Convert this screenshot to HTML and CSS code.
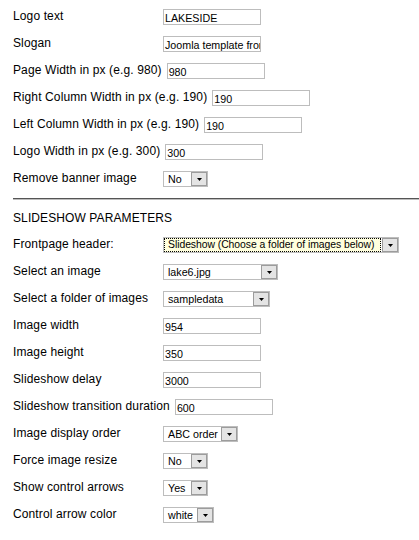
FILE: index.html
```html
<!DOCTYPE html>
<html>
<head>
<meta charset="utf-8">
<title>Template parameters</title>
<link rel="stylesheet" href="styles.css">
</head>
<body>
<div class="form">
  <div class="row"><span class="key">Logo text</span><span class="field">LAKESIDE</span></div>
  <div class="row"><span class="key">Slogan</span><span class="field">Joomla template from</span></div>
  <div class="row"><span class="key">Page Width in px (e.g. 980)</span><span class="field">980</span></div>
  <div class="row"><span class="key">Right Column Width in px (e.g. 190)</span><span class="field">190</span></div>
  <div class="row"><span class="key">Left Column Width in px (e.g. 190)</span><span class="field">190</span></div>
  <div class="row"><span class="key">Logo Width in px (e.g. 300)</span><span class="field">300</span></div>
  <div class="row"><span class="key">Remove banner image</span>
    <div class="select sel-yesno"><span class="val">No</span><span class="arrow"><svg width="5" height="3" viewBox="0 0 5 3"><polygon points="0,0 5,0 2.5,3" fill="#000"/></svg></span></div>
  </div>

  <hr class="sep">

  <div class="heading">SLIDESHOW PARAMETERS</div>

  <div class="row"><span class="key">Frontpage header:</span>
    <div class="select sel-wide focused"><span class="val">Slideshow (Choose a folder of images below)</span><span class="arrow"><svg width="5" height="3" viewBox="0 0 5 3"><polygon points="0,0 5,0 2.5,3" fill="#000"/></svg></span></div>
  </div>
  <div class="row"><span class="key">Select an image</span>
    <div class="select sel-image"><span class="val">lake6.jpg</span><span class="arrow"><svg width="5" height="3" viewBox="0 0 5 3"><polygon points="0,0 5,0 2.5,3" fill="#000"/></svg></span></div>
  </div>
  <div class="row"><span class="key">Select a folder of images</span>
    <div class="select sel-folder"><span class="val">sampledata</span><span class="arrow"><svg width="5" height="3" viewBox="0 0 5 3"><polygon points="0,0 5,0 2.5,3" fill="#000"/></svg></span></div>
  </div>
  <div class="row"><span class="key">Image width</span><span class="field">954</span></div>
  <div class="row"><span class="key">Image height</span><span class="field">350</span></div>
  <div class="row"><span class="key">Slideshow delay</span><span class="field">3000</span></div>
  <div class="row"><span class="key">Slideshow transition duration</span><span class="field">600</span></div>
  <div class="row"><span class="key">Image display order</span>
    <div class="select sel-order"><span class="val">ABC order</span><span class="arrow"><svg width="5" height="3" viewBox="0 0 5 3"><polygon points="0,0 5,0 2.5,3" fill="#000"/></svg></span></div>
  </div>
  <div class="row"><span class="key">Force image resize</span>
    <div class="select sel-yesno"><span class="val">No</span><span class="arrow"><svg width="5" height="3" viewBox="0 0 5 3"><polygon points="0,0 5,0 2.5,3" fill="#000"/></svg></span></div>
  </div>
  <div class="row"><span class="key">Show control arrows</span>
    <div class="select sel-yesno"><span class="val">Yes</span><span class="arrow"><svg width="5" height="3" viewBox="0 0 5 3"><polygon points="0,0 5,0 2.5,3" fill="#000"/></svg></span></div>
  </div>
  <div class="row"><span class="key">Control arrow color</span>
    <div class="select sel-color"><span class="val">white</span><span class="arrow"><svg width="5" height="3" viewBox="0 0 5 3"><polygon points="0,0 5,0 2.5,3" fill="#000"/></svg></span></div>
  </div>
</div>
</body>
</html>
```
FILE: styles.css
```css
html, body {
  margin: 0;
  padding: 0;
  background: #ffffff;
}

body {
  font-family: "Liberation Sans", Arial, sans-serif;
  font-size: 12px;
  color: #000000;
  overflow: hidden;
}

.form {
  padding: 9px 0 0 13px;
}

.row {
  display: flex;
  align-items: flex-start;
  height: 16px;
  margin-bottom: 11px;
}

.key {
  min-width: 145px;
  margin-right: 5px;
  line-height: 14px;
  white-space: nowrap;
  letter-spacing: 0.12px;
}

.field {
  box-sizing: border-box;
  width: 98px;
  height: 16px;
  border: 1px solid #bdbdbd;
  padding: 2px 1px 0 1px;
  font-size: 10.7px;
  line-height: 12px;
  white-space: nowrap;
  overflow: hidden;
  background: #ffffff;
}

.select {
  box-sizing: border-box;
  display: flex;
  height: 16px;
  border: 1px solid #bdbdbd;
  background: #ffffff;
}

.select .val {
  flex: 1;
  min-width: 0;
  box-sizing: border-box;
  height: 14px;
  padding: 1px 0 0 4px;
  font-size: 10.7px;
  line-height: 12px;
  white-space: nowrap;
  overflow: hidden;
}

.select .arrow {
  box-sizing: border-box;
  flex: none;
  width: 16px;
  height: 14px;
  border: 1px solid #9c9c9c;
  background: #e4e4e4;
  display: flex;
  align-items: center;
  justify-content: center;
}

.select .arrow svg {
  display: block;
  margin-top: 1px;
}

.select.focused .val {
  background: #ffffde;
  border: 1px dotted #000000;
  padding: 0 0 0 3px;
  margin-right: 1px;
  font-size: 10.4px;
  letter-spacing: -0.05px;
}

.sel-yesno { width: 45px; }
.sel-wide { width: 236px; }
.sel-image { width: 115px; }
.sel-folder { width: 107px; }
.sel-order { width: 75px; }
.sel-color { width: 51px; }

.sep {
  height: 0;
  margin: 0 0 11px 0;
  border: 0;
  border-top: 1px solid #555555;
  border-bottom: 1px solid #bdbdbd;
}

.heading {
  line-height: 14px;
  margin-bottom: 12px;
  letter-spacing: 0.1px;
}
```
